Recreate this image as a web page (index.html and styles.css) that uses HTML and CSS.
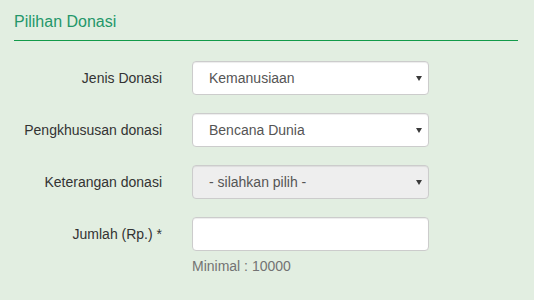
FILE: index.html
```html
<!DOCTYPE html>
<html lang="id">
<head>
<meta charset="utf-8">
<title>Pilihan Donasi</title>
<link rel="stylesheet" href="styles.css">
</head>
<body>
<section class="panel">
  <h3 class="panel-title">Pilihan Donasi</h3>
  <form class="form">
    <div class="row">
      <label class="label" for="jenis">Jenis Donasi</label>
      <div class="select-wrap">
        <select id="jenis" class="control select">
          <option>Kemanusiaan</option>
        </select>
      </div>
    </div>
    <div class="row">
      <label class="label" for="khusus">Pengkhususan donasi</label>
      <div class="select-wrap">
        <select id="khusus" class="control select">
          <option>Bencana Dunia</option>
        </select>
      </div>
    </div>
    <div class="row">
      <label class="label" for="ket">Keterangan donasi</label>
      <div class="select-wrap">
        <select id="ket" class="control select" disabled>
          <option>- silahkan pilih -</option>
        </select>
      </div>
    </div>
    <div class="row">
      <label class="label" for="jumlah">Jumlah (Rp.) *</label>
      <div class="field">
        <input id="jumlah" class="control input" type="text">
        <p class="help">Minimal : 10000</p>
      </div>
    </div>
  </form>
</section>
</body>
</html>
```

FILE: styles.css
```css
* { box-sizing: border-box; }

html, body {
  margin: 0;
  padding: 0;
  background: #e2eee1;
  font-family: "Liberation Sans", Arial, sans-serif;
  font-size: 14px;
  color: #333;
}

.panel {
  padding: 0 16px 0 14px;
}

.panel-title {
  margin: 0;
  padding: 13px 0 9px;
  font-size: 16px;
  line-height: 18px;
  font-weight: normal;
  color: #24976a;
  border-bottom: 1px solid #129a4a;
}

.form {
  padding-top: 20px;
  display: flex;
  flex-direction: column;
  gap: 18px;
}

.row {
  display: grid;
  grid-template-columns: 148px 237px;
  column-gap: 30px;
  align-items: start;
}

.label {
  text-align: right;
  line-height: 20px;
  padding-top: 7px;
  color: #333;
}

.select-wrap {
  position: relative;
}

.select-wrap::after {
  content: "";
  position: absolute;
  right: 7px;
  top: 15px;
  width: 0;
  height: 0;
  border-left: 3px solid transparent;
  border-right: 3px solid transparent;
  border-top: 5px solid #3a3a3a;
  pointer-events: none;
}

.control {
  display: block;
  width: 237px;
  height: 34px;
  margin: 0;
  padding: 6px 12px 6px 16px;
  font-family: "Liberation Sans", Arial, sans-serif;
  font-size: 14px;
  line-height: 20px;
  color: #555;
  background: #fff;
  border: 1px solid #ccc;
  border-radius: 4px;
  box-shadow: inset 0 1px 1px rgba(0, 0, 0, 0.075);
  outline: none;
}

.select {
  -webkit-appearance: none;
  appearance: none;
}

.select:disabled {
  background: #eee;
  color: #555;
  opacity: 1;
}

.input {
  padding-left: 12px;
}

.help {
  margin: 5px 0 0;
  line-height: 20px;
  color: #737373;
}
```
